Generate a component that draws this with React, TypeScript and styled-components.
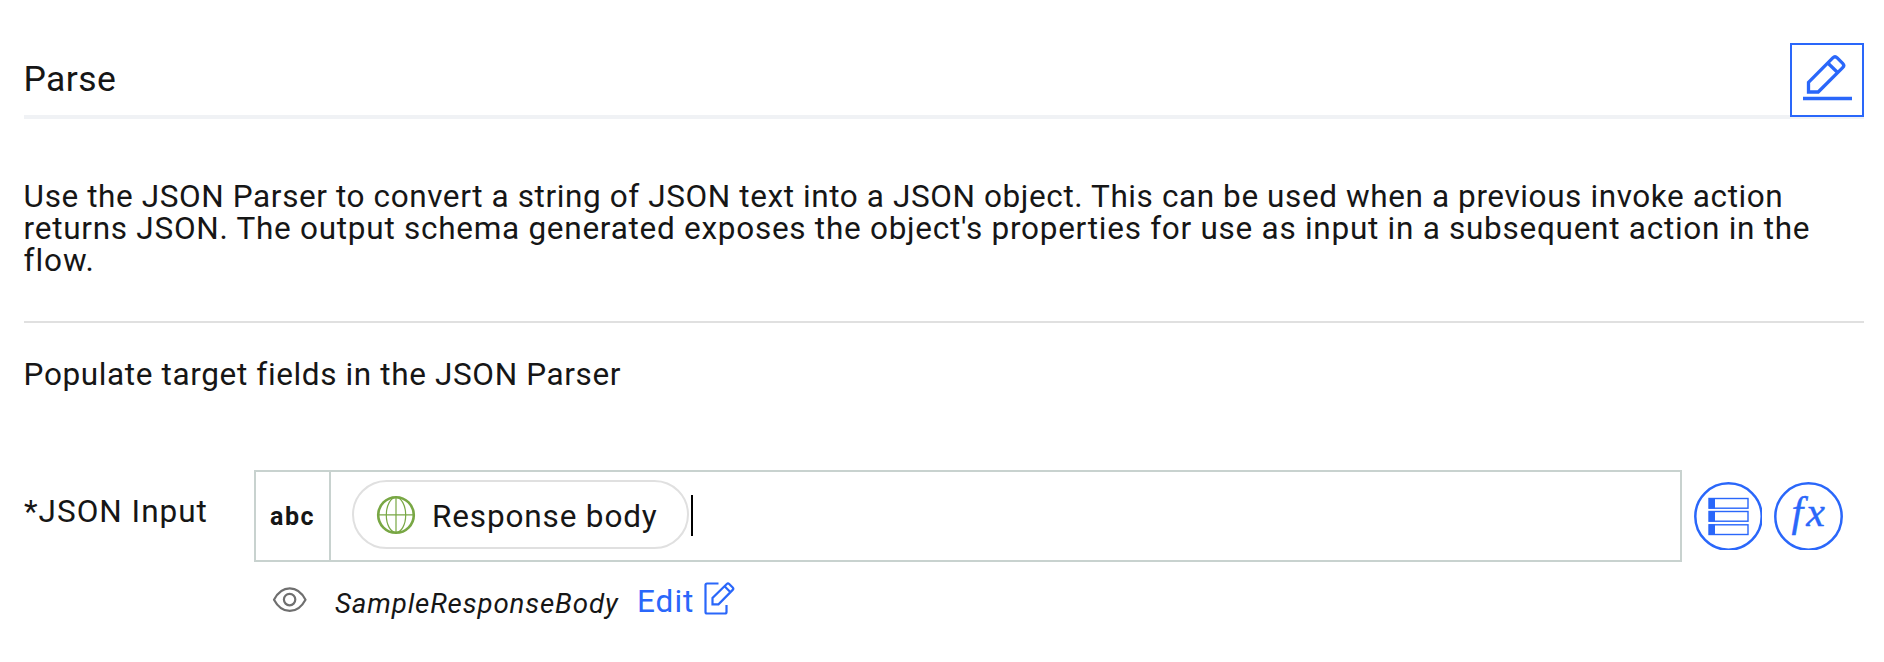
import React from "react";
import styled, { createGlobalStyle } from "styled-components";

const BLUE = "#2a67fa";

const GlobalStyle = createGlobalStyle`
  * { box-sizing: border-box; }
  body {
    margin: 0;
    background: #fff;
    color: #161616;
    font-family: Roboto, "Noto Sans", sans-serif;
    font-size: 31.5px;
    line-height: 32px;
  }
`;

const Page = styled.main`
  padding: 43px 20px 0 24px;
`;

const Header = styled.header`
  display: flex;
  justify-content: space-between;
  align-items: flex-start;
  height: 76px;
  background: linear-gradient(#f0f2f5, #f0f2f5) 0 100% / 100% 4px no-repeat;
`;

const Title = styled.h1`
  margin: 16px 0 0 -0.5px;
  font-size: 35.5px;
  line-height: 40px;
  font-weight: 400;
  letter-spacing: 0.4px;
`;

const EditButton = styled.button`
  width: 74px;
  height: 74px;
  padding: 0;
  border: 2px solid ${BLUE};
  background: #fff;
  color: ${BLUE};
  svg { display: block; }
`;

const Description = styled.p`
  margin: 0;
  padding: 62px 0 44px;
  border-bottom: 2px solid #e0e0e0;
`;

const Line = styled.span<{ $spacing: number }>`
  display: block;
  margin-left: -0.4px;
  white-space: nowrap;
  letter-spacing: ${(p) => p.$spacing}px;
`;

const Instruction = styled.div`
  padding-top: 36px;
  height: 147px;
  margin-left: -0.4px;
`;

const FieldRow = styled.div`
  display: flex;
  align-items: flex-start;
`;

const Label = styled.label`
  width: 230px;
  padding-top: 26px;
  white-space: nowrap;
`;

const InputBox = styled.div`
  display: flex;
  width: 1428px;
  height: 92px;
  border: 2px solid #c8d2cf;
`;

const TypeTag = styled.div`
  display: flex;
  align-items: center;
  justify-content: center;
  width: 75px;
  padding-top: 1px;
  border-right: 2px solid #c8d2cf;
  font-size: 25px;
  font-weight: 700;
  letter-spacing: 1.5px;
`;

const InputContent = styled.div`
  display: flex;
  align-items: flex-start;
  padding: 8px 0 0 21px;
`;

const Pill = styled.div`
  display: flex;
  align-items: center;
  width: 337px;
  height: 69px;
  padding-left: 22px;
  border: 2px solid #e0e0e0;
  border-radius: 35px;
  white-space: nowrap;
  svg { margin-right: 16px; flex: none; }
  span { padding-top: 4px; }
`;

const Caret = styled.span`
  width: 2px;
  height: 41px;
  margin: 15px 0 0 2px;
  background: #000;
`;

const Actions = styled.div`
  display: flex;
  gap: 11px;
  padding: 12px 0 0 12px;
`;

const ActionButton = styled.button`
  width: 69px;
  height: 68px;
  padding: 0;
  border: 0;
  background: none;
  svg { display: block; }
`;

const SampleRow = styled.div`
  display: flex;
  align-items: flex-start;
  padding: 24px 0 0 248px;
`;

const SampleName = styled.em`
  width: 302px;
  margin: 2px 0 0 28px;
  font-size: 27.7px;
  white-space: nowrap;
`;

const EditLink = styled.a`
  display: flex;
  color: ${BLUE};
  svg { margin: -6px 0 0 3px; }
`;

const Text = styled.span<{ $spacing: number; $width?: number }>`
  letter-spacing: ${(p) => p.$spacing}px;
  width: ${(p) => (p.$width ? `${p.$width}px` : "auto")};
`;

const PencilUnderline = () => (
  <svg width="70" height="70" viewBox="1792 45 70 70" fill="none" stroke="currentColor" strokeWidth="3.3">
    <path d="M1808.500 92V82.400L1832.800 57.800q2.200-2.200 4.400 0l5.500 5.500q2.200 2.200 0 4.400L1818.200 92Z" />
    <path d="M1827.800 63l9.800 9.500" />
    <path d="M1803 98.500h49" />
  </svg>
);

const Globe = () => (
  <svg width="40" height="40" viewBox="-20 -20 40 40" fill="none" stroke="#78a744">
    <circle r="17.8" strokeWidth="2.6" />
    <ellipse rx="9.7" ry="17.5" strokeWidth="1.2" />
    <path d="M0-18V18M-18-.2H18" strokeWidth="1.2" />
  </svg>
);

const Eye = () => (
  <svg width="35" height="28" viewBox="272 586 35 28" fill="none" stroke="#6f6f6f" strokeWidth="2.2">
    <path d="M274 599.700C282 584.600 297.500 584.600 305.500 599.700C297.500 614.700 282 614.700 274 599.700Z" strokeLinejoin="round" />
    <circle cx="289.600" cy="599.600" r="5.700" />
  </svg>
);

const EditDoc = () => (
  <svg width="34" height="36" viewBox="702 580 34 36" fill="none" stroke="currentColor" strokeWidth="2.2">
    <path d="M718.500 583.500H707q-1.500 0-1.500 1.500V612q0 1.500 1.500 1.500H725q1.500 0 1.500-1.500V605" />
    <path d="M712.500 604.300V598L726.800 584q1.200-1.200 2.400 0l3.500 3.500q1.200 1.200 0 2.400L718.500 604.300ZM724.800 586.500l5.700 5.800" />
  </svg>
);

const Mapping = () => (
  <svg width="69" height="68" viewBox="1694 482 69 68" fill="none" stroke={BLUE}>
    <clipPath id="mapping-edge"><path d="M1694 482h68v68h-68z" /></clipPath>
    <circle cx="1728.500" cy="516.500" r="33.200" strokeWidth="2.500" clipPath="url(#mapping-edge)" />
    {[498, 511, 524.3].map((y) => (
      <g key={y}>
        <rect x="1709" y={y + 0.5} width="39" height="9.700" strokeWidth="1.400" />
        <rect x="1709" y={y} width="6" height="10.500" fill={BLUE} stroke="none" />
      </g>
    ))}
  </svg>
);

const Formula = () => (
  <svg width="69" height="68" viewBox="1774 482 69 68">
    <circle cx="1808.500" cy="516.500" r="33.200" strokeWidth="2.500" fill="none" stroke={BLUE} />
    <text x="1791.500" y="526" fill={BLUE} stroke={BLUE} strokeWidth="0.400" fontFamily="Liberation Serif, serif" fontStyle="italic" fontSize="42" letterSpacing="3">fx</text>
  </svg>
);

export default function App() {
  return (
    <>
      <GlobalStyle />
      <Page>
        <Header>
          <Title>Parse</Title>
          <EditButton aria-label="Edit title"><PencilUnderline /></EditButton>
        </Header>
        <Description>
          <Line $spacing={0.6}>Use the JSON Parser to convert a string of JSON text into a JSON object. This can be used when a previous invoke action</Line>
          <Line $spacing={0.73}>returns JSON. The output schema generated exposes the object's properties for use as input in a subsequent action in the</Line>
          <Line $spacing={0.9}>flow.</Line>
        </Description>
        <Instruction><Text $spacing={0.63}>Populate target fields in the JSON Parser</Text></Instruction>
        <FieldRow>
          <Label><Text $spacing={1}>*JSON Input</Text></Label>
          <InputBox>
            <TypeTag>abc</TypeTag>
            <InputContent>
              <Pill><Globe /><Text $spacing={0.85}>Response body</Text></Pill>
              <Caret />
            </InputContent>
          </InputBox>
          <Actions>
            <ActionButton aria-label="Insert a reference"><Mapping /></ActionButton>
            <ActionButton aria-label="Apply a function"><Formula /></ActionButton>
          </Actions>
        </FieldRow>
        <SampleRow>
          <Eye />
          <SampleName><Text $spacing={0.87}>SampleResponseBody</Text></SampleName>
          <EditLink><Text $spacing={1} $width={62}>Edit</Text><EditDoc /></EditLink>
        </SampleRow>
      </Page>
    </>
  );
}
